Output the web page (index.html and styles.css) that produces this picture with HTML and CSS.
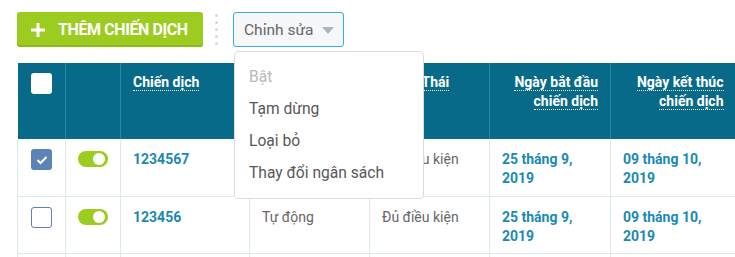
FILE: index.html
```html
<!DOCTYPE html>
<html lang="vi">
<head>
<meta charset="utf-8">
<link rel="stylesheet" href="styles.css">
</head>
<body>
<div class="page">
  <div class="toolbar">
    <button class="btn-add">
      <svg class="plus" width="16" height="16" viewBox="0 0 16 16"><path d="M8 1v14M1 8h14" stroke="#fff" stroke-width="3"/></svg>
      <span>THÊM CHIẾN DỊCH</span>
    </button>
    <div class="sep"><i></i><i></i><i></i><i></i><i></i></div>
    <div class="select-wrap">
      <div class="select">Chỉnh sửa <span class="caret"></span></div>
      <ul class="menu">
        <li class="disabled">Bật</li>
        <li>Tạm dừng</li>
        <li>Loại bỏ</li>
        <li>Thay đổi ngân sách</li>
      </ul>
    </div>
  </div>
  <table class="grid">
    <colgroup>
      <col class="c1"><col class="c2"><col class="c3"><col class="c4"><col class="c5"><col class="c6"><col class="c7">
    </colgroup>
    <thead>
      <tr>
        <th><span class="cb cb-head"></span></th>
        <th></th>
        <th><span class="dt">Chiến dịch</span></th>
        <th><span class="dt">Loại</span></th>
        <th><span class="dt">Trạng Thái</span></th>
        <th class="r"><span class="dt">Ngày bắt đầu</span><br><span class="dt">chiến dịch</span></th>
        <th class="r"><span class="dt">Ngày kết thúc</span><br><span class="dt">chiến dịch</span></th>
      </tr>
    </thead>
    <tbody>
      <tr>
        <td><span class="cb cb-on"><svg width="12" height="10" viewBox="0 0 12 10"><path d="M1.5 5l3 3 6-6" fill="none" stroke="#fff" stroke-width="2"/></svg></span></td>
        <td><span class="tog"></span></td>
        <td class="link">1234567</td>
        <td>Tự động</td>
        <td>Đủ điều kiện</td>
        <td class="link">25 tháng 9,<br>2019</td>
        <td class="link">09 tháng 10,<br>2019</td>
      </tr>
      <tr>
        <td><span class="cb cb-off"></span></td>
        <td><span class="tog"></span></td>
        <td class="link">123456</td>
        <td>Tự động</td>
        <td>Đủ điều kiện</td>
        <td class="link">25 tháng 9,<br>2019</td>
        <td class="link">09 tháng 10,<br>2019</td>
      </tr>
      <tr class="tail">
        <td></td><td></td><td></td><td></td><td></td><td></td><td></td>
      </tr>
    </tbody>
  </table>
</div>
</body>
</html>
```

FILE: styles.css
```css
html, body {
  margin: 0;
  padding: 0;
  background: #fff;
  font-family: Roboto, "Noto Sans", sans-serif;
  overflow: hidden;
}
.page {
  padding: 12px 0 0 17px;
  width: 718px;
}
.toolbar {
  display: flex;
  align-items: flex-start;
  height: 35px;
  margin-bottom: 16px;
}
.btn-add {
  display: flex;
  align-items: center;
  gap: 12px;
  height: 35px;
  width: 186px;
  padding: 0 0 0 13px;
  border: 0;
  border-radius: 3px;
  background: #9ccc1f;
  box-shadow: inset 0 -2px 0 #8cbb17;
  color: #fff;
  font-family: Roboto, sans-serif;
  font-weight: 700;
  font-size: 16px;
  letter-spacing: -0.4px;
  cursor: pointer;
}
.plus { display: block; margin-top: 1px; }
.sep {
  display: flex;
  flex-direction: column;
  gap: 4px;
  margin: 2px 15px 0 12px;
}
.sep i {
  display: block;
  width: 3px;
  height: 3px;
  border-radius: 50%;
  background: #d4d8db;
}
.select-wrap { position: relative; }
.select {
  box-sizing: border-box;
  height: 35px;
  width: 111px;
  padding: 0 0 0 10px;
  display: flex;
  align-items: center;
  border: 1px solid #35aee0;
  border-radius: 3px;
  background: #f5f7f9;
  color: #666;
  font-size: 15.5px;
}
.caret {
  margin-left: 9px;
  width: 0;
  height: 0;
  border-left: 6px solid transparent;
  border-right: 6px solid transparent;
  border-top: 7px solid #aab6c2;
  margin-top: 2px;
}
.menu {
  position: absolute;
  top: 39px;
  left: 1px;
  z-index: 5;
  box-sizing: border-box;
  width: 190px;
  height: 148px;
  margin: 0;
  padding: 9px 0 0 14px;
  list-style: none;
  background: #fff;
  border: 1px solid #dcdcdc;
  border-radius: 4px;
}
.menu li {
  height: 32px;
  line-height: 32px;
  font-size: 15.6px;
  color: #585858;
}
.menu li.disabled { color: #b8b8b8; }

.grid {
  border-collapse: collapse;
  table-layout: fixed;
  width: 718px;
}
.c1 { width: 48px; }
.c2 { width: 55px; }
.c3 { width: 129px; }
.c4 { width: 120px; }
.c5 { width: 120px; }
.c6 { width: 121px; }
.c7 { width: 125px; }
th {
  background: #086a89;
  color: #fff;
  height: 76px;
  box-sizing: border-box;
  padding: 10px 12px 0 12px;
  text-align: left;
  vertical-align: top;
  font-size: 14px;
  font-weight: 700;
  line-height: 19px;
  border-left: 1px solid #2e86a2;
}
th:first-child { border-left: 0; padding-left: 13px; padding-top: 10px; }
th.r { text-align: right; }
.dt {
  border-bottom: 1px dotted #fff;
  line-height: 16px;
}
td {
  border: 1px solid #dde9ed;
  height: 57px;
  box-sizing: border-box;
  padding: 11px 12px 0 12px;
  vertical-align: top;
  color: #666;
  font-size: 14px;
  line-height: 19px;
}
td:first-child { padding-left: 13px; padding-top: 10px; }
tbody tr:first-child td { border-top: 0; }
td.link {
  color: #1a8ab3;
  font-weight: 700;
}
.tail td { height: 10px; }
.cb {
  display: block;
  box-sizing: border-box;
  width: 21px;
  height: 21px;
  border-radius: 3px;
}
.cb-head { background: #fff; }
.cb-on {
  background: #5b83b3;
  display: flex;
  align-items: center;
  justify-content: center;
}
.cb-on svg { display: block; }
.cb-off {
  border: 1.5px solid #5b83b3;
  background: #fff;
}
.tog {
  display: block;
  position: relative;
  width: 30px;
  height: 16px;
  border-radius: 8px;
  background: #9ccc1f;
  margin-top: 1px;
}
.tog::after {
  content: "";
  position: absolute;
  right: 3px;
  top: 2px;
  width: 12px;
  height: 12px;
  border-radius: 50%;
  background: #fff;
}
```
